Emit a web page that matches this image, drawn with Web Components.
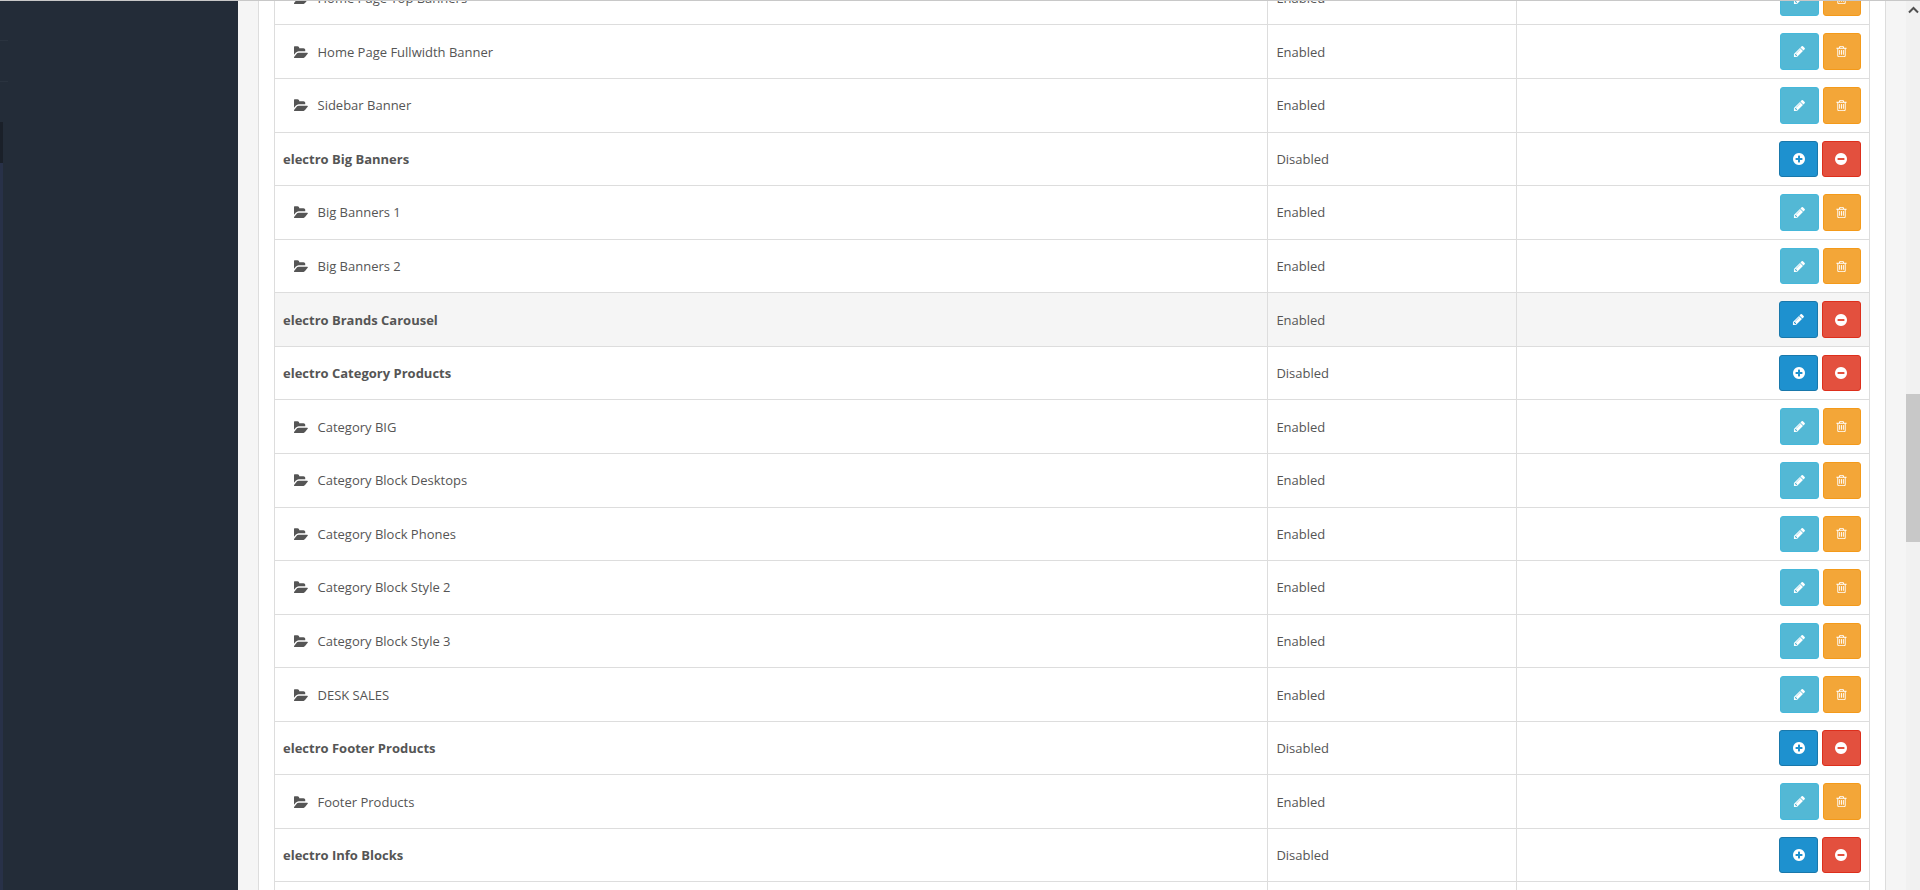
<!DOCTYPE html>
<html>
<head>
<meta charset="utf-8">
<title>Layouts</title>
<style>
html, body { margin: 0; height: 890px; overflow: hidden; background: #f5f5f5; }
body { font-family: "Open Sans", sans-serif; font-size: 13px; color: #555; }
</style>
</head>
<body>
<script>
const ICONS = {
    folder: 'M1781 931q0 35-35 76l-336 396q-43 51-120.500 86.500t-143.500 35.500h-1088q-34 0-60.500-13t-26.500-43q0-35 35-76l336-396q43-51 120.500-86.500t143.500-35.500h1088q34 0 60.500 13t26.500 43zM1438 519v160h-832q-94 0-197 47.500t-164 119.500l-337 396-5 6q0-4-.5-12.500t-.5-12.500v-960q0-92 66-158t158-66h320q92 0 158 66t66 158v32h544q92 0 158 66t66 158z',
    pencil: 'M491 1536l91-91-235-235-91 91v107h128v128h107zm523-928q0-22-22-22-10 0-17 7l-542 542q-7 7-7 17 0 22 22 22 10 0 17-7l542-542q7-7 7-17zm-54-192l416 416-832 832h-416v-416zm683 96q0 53-37 90l-166 166-416-416 166-165q36-38 90-38 53 0 91 38l235 234q37 39 37 91z',
    trash: 'M704 736v576q0 14-9 23t-23 9h-64q-14 0-23-9t-9-23v-576q0-14 9-23t23-9h64q14 0 23 9t9 23zm256 0v576q0 14-9 23t-23 9h-64q-14 0-23-9t-9-23v-576q0-14 9-23t23-9h64q14 0 23 9t9 23zm256 0v576q0 14-9 23t-23 9h-64q-14 0-23-9t-9-23v-576q0-14 9-23t23-9h64q14 0 23 9t9 23zm128 724v-948h-896v948q0 22 7 40.500t14.500 27 10.500 8.500h832q3 0 10.500-8.500t14.500-27 7-40.500zm-672-1076h448l-48-117q-7-9-17-11h-317q-10 2-17 11zm928 32v64q0 14-9 23t-23 9h-96v948q0 83-47 143.500t-113 60.500h-832q-66 0-113-58.500t-47-141.500v-952h-96q-14 0-23-9t-9-23v-64q0-14 9-23t23-9h309l70-167q15-37 54-63t79-26h320q40 0 79 26t54 63l70 167h309q14 0 23 9t9 23z',
    plus: 'M1344 960v-128q0-26-19-45t-45-19h-256v-256q0-26-19-45t-45-19h-128q-26 0-45 19t-19 45v256h-256q-26 0-45 19t-19 45v128q0 26 19 45t45 19h256v256q0 26 19 45t45 19h128q26 0 45-19t19-45v-256h256q26 0 45-19t19-45zm320-64q0 209-103 385.500t-279.500 279.500-385.500 103-385.500-103-279.500-279.500-103-385.500 103-385.500 279.500-279.500 385.500-103 385.500 103 279.500 279.500 103 385.500z',
    minus: 'M1344 960v-128q0-26-19-45t-45-19h-768q-26 0-45 19t-19 45v128q0 26 19 45t45 19h768q26 0 45-19t19-45zm320-64q0 209-103 385.500t-279.500 279.500-385.500 103-385.500-103-279.500-279.500-103-385.500 103-385.500 279.500-279.500 385.500-103 385.500 103 279.500 279.500 103 385.500z'
};

function iconSvg(name, size) {
    return `<svg width="${size}" height="${size}" viewBox="0 0 1792 1792" fill="currentColor" aria-hidden="true"><path d="${ICONS[name]}"/></svg>`;
}

class ActionButton extends HTMLElement {
    connectedCallback() {
        const kind = this.getAttribute('kind');
        const icon = { edit: 'pencil', modify: 'pencil', trash: 'trash', add: 'plus', remove: 'minus' }[kind];
        this.attachShadow({ mode: 'open' });
        this.shadowRoot.innerHTML = `
            <style>
                :host {
                    display: flex;
                    align-items: center;
                    justify-content: center;
                    box-sizing: border-box;
                    height: 36.57px;
                    border-radius: 3px;
                    border: 1px solid;
                    color: #fff;
                }
                :host([kind="edit"]) { width: 38.6px; background: #53b8d5; border-color: #46b8da; }
                :host([kind="trash"]) { width: 37.6px; background: #f3a638; border-color: #f49a1a; }
                :host([kind="add"]), :host([kind="modify"]) { width: 38.6px; background: #1e91cf; border-color: #1978ab; }
                :host([kind="remove"]) { width: 38.6px; background: #e3503e; border-color: #dd2f1c; }
                svg { display: block; }
            </style>
            ${iconSvg(icon, icon === 'plus' || icon === 'minus' ? 14 : 13)}
        `;
    }
}

class LayoutRow extends HTMLElement {
    connectedCallback() {
        const child = this.hasAttribute('child');
        const disabled = this.hasAttribute('disabled');
        // the row cut by the window bottom only shows its borders
        const blank = this.hasAttribute('blank');
        const actions = child
            ? '<action-button kind="edit"></action-button><action-button kind="trash"></action-button>'
            : `<action-button kind="${disabled ? 'add' : 'modify'}"></action-button><action-button kind="remove"></action-button>`;
        this.attachShadow({ mode: 'open' });
        this.shadowRoot.innerHTML = `
            <style>
                :host {
                    display: grid;
                    grid-template-columns: 992.4px 248.6px 1fr;
                    box-sizing: border-box;
                    height: 53.57px;
                    border-bottom: 1px solid #ddd;
                }
                :host([active]) { background: #f5f5f5; }
                .cell {
                    display: flex;
                    align-items: center;
                    padding: 0 8px;
                    min-width: 0;
                }
                .cell + .cell { border-left: 1px solid #ddd; }
                .name { gap: 10px; }
                :host([child]) .name { padding-left: 18.5px; }
                :host(:not([child])) .name { font-weight: 700; }
                .name svg { margin-top: 2px; }
                .actions { justify-content: flex-end; gap: 4px; padding-right: 8.5px; }
                svg { display: block; flex: none; }
            </style>
            <div class="cell name">${child && !blank ? iconSvg('folder', 14) : ''}<span><slot></slot></span></div>
            <div class="cell status">${blank ? '' : disabled ? 'Disabled' : 'Enabled'}</div>
            <div class="cell actions">${blank ? '' : actions}</div>
        `;
    }
}

class LayoutTable extends HTMLElement {
    constructor() {
        super();
        this.attachShadow({ mode: 'open' });
        this.shadowRoot.innerHTML = `
            <style>
                :host {
                    display: block;
                    border-left: 1px solid #ddd;
                    border-right: 1px solid #ddd;
                }
            </style>
            <slot></slot>
        `;
    }
}

class AdminPanel extends HTMLElement {
    constructor() {
        super();
        this.attachShadow({ mode: 'open' });
        this.shadowRoot.innerHTML = `
            <style>
                :host {
                    display: block;
                    flex: 1;
                    min-width: 0;
                    box-sizing: border-box;
                    margin: 0 20px;
                    padding: 0 15px;
                    background: #fff;
                    border-left: 1px solid #ddd;
                    border-right: 1px solid #ddd;
                    height: 890px;
                    overflow: hidden;
                }
                /* page is scrolled down, first row is cut by the window top */
                .scrolled { margin-top: -28.1px; }
            </style>
            <div class="scrolled"><slot></slot></div>
        `;
    }
}

class SideColumn extends HTMLElement {
    constructor() {
        super();
        this.attachShadow({ mode: 'open' });
        this.shadowRoot.innerHTML = `
            <style>
                :host { display: block; flex: none; position: relative; width: 238px; background: #232c38; }
                .tick { position: absolute; left: 0; width: 8px; height: 1px; background: #2a333f; }
                .mark { position: absolute; left: 0; top: 122px; width: 3px; height: 41px; background: #1a2029; }
                .rest { position: absolute; left: 0; top: 163px; bottom: 0; width: 3px; background: #283148; }
            </style>
            <div class="tick" style="top: 40px"></div>
            <div class="tick" style="top: 81px"></div>
            <div class="mark"></div>
            <div class="rest"></div>
        `;
    }
}

class ScrollTrack extends HTMLElement {
    constructor() {
        super();
        this.attachShadow({ mode: 'open' });
        this.shadowRoot.innerHTML = `
            <style>
                :host { display: block; flex: none; position: relative; width: 14px; background: #f1f1f1; }
                .thumb { position: absolute; left: 0; right: 0; top: 394px; height: 148px; background: #c8c8c8; }
                svg { position: absolute; left: 2px; top: 6px; }
            </style>
            <svg width="11" height="8" viewBox="0 0 11 8"><path d="M1 6.500 L5.500 2 L10 6.500" fill="none" stroke="#505050" stroke-width="2"/></svg>
            <div class="thumb"></div>
        `;
    }
}

class AdminPage extends HTMLElement {
    constructor() {
        super();
        this.attachShadow({ mode: 'open' });
        this.shadowRoot.innerHTML = `
            <style>
                :host { display: flex; height: 890px; position: relative; }
                .edge { position: absolute; left: 0; right: 0; top: 0; height: 1px; background: #c8c8c8; }
            </style>
            <slot></slot>
            <div class="edge"></div>
        `;
    }
}

customElements.define('action-button', ActionButton);
customElements.define('layout-row', LayoutRow);
customElements.define('layout-table', LayoutTable);
customElements.define('admin-panel', AdminPanel);
customElements.define('side-column', SideColumn);
customElements.define('scroll-track', ScrollTrack);
customElements.define('admin-page', AdminPage);
</script>

<admin-page>
    <side-column></side-column>
    <admin-panel>
        <layout-table>
            <layout-row child>Home Page Top Banners</layout-row>
            <layout-row child>Home Page Fullwidth Banner</layout-row>
            <layout-row child>Sidebar Banner</layout-row>
            <layout-row disabled>electro Big Banners</layout-row>
            <layout-row child>Big Banners 1</layout-row>
            <layout-row child>Big Banners 2</layout-row>
            <layout-row active>electro Brands Carousel</layout-row>
            <layout-row disabled>electro Category Products</layout-row>
            <layout-row child>Category BIG</layout-row>
            <layout-row child>Category Block Desktops</layout-row>
            <layout-row child>Category Block Phones</layout-row>
            <layout-row child>Category Block Style 2</layout-row>
            <layout-row child>Category Block Style 3</layout-row>
            <layout-row child>DESK SALES</layout-row>
            <layout-row disabled>electro Footer Products</layout-row>
            <layout-row child>Footer Products</layout-row>
            <layout-row disabled>electro Info Blocks</layout-row>
            <layout-row child blank></layout-row>
        </layout-table>
    </admin-panel>
    <scroll-track></scroll-track>
</admin-page>
</body>
</html>
